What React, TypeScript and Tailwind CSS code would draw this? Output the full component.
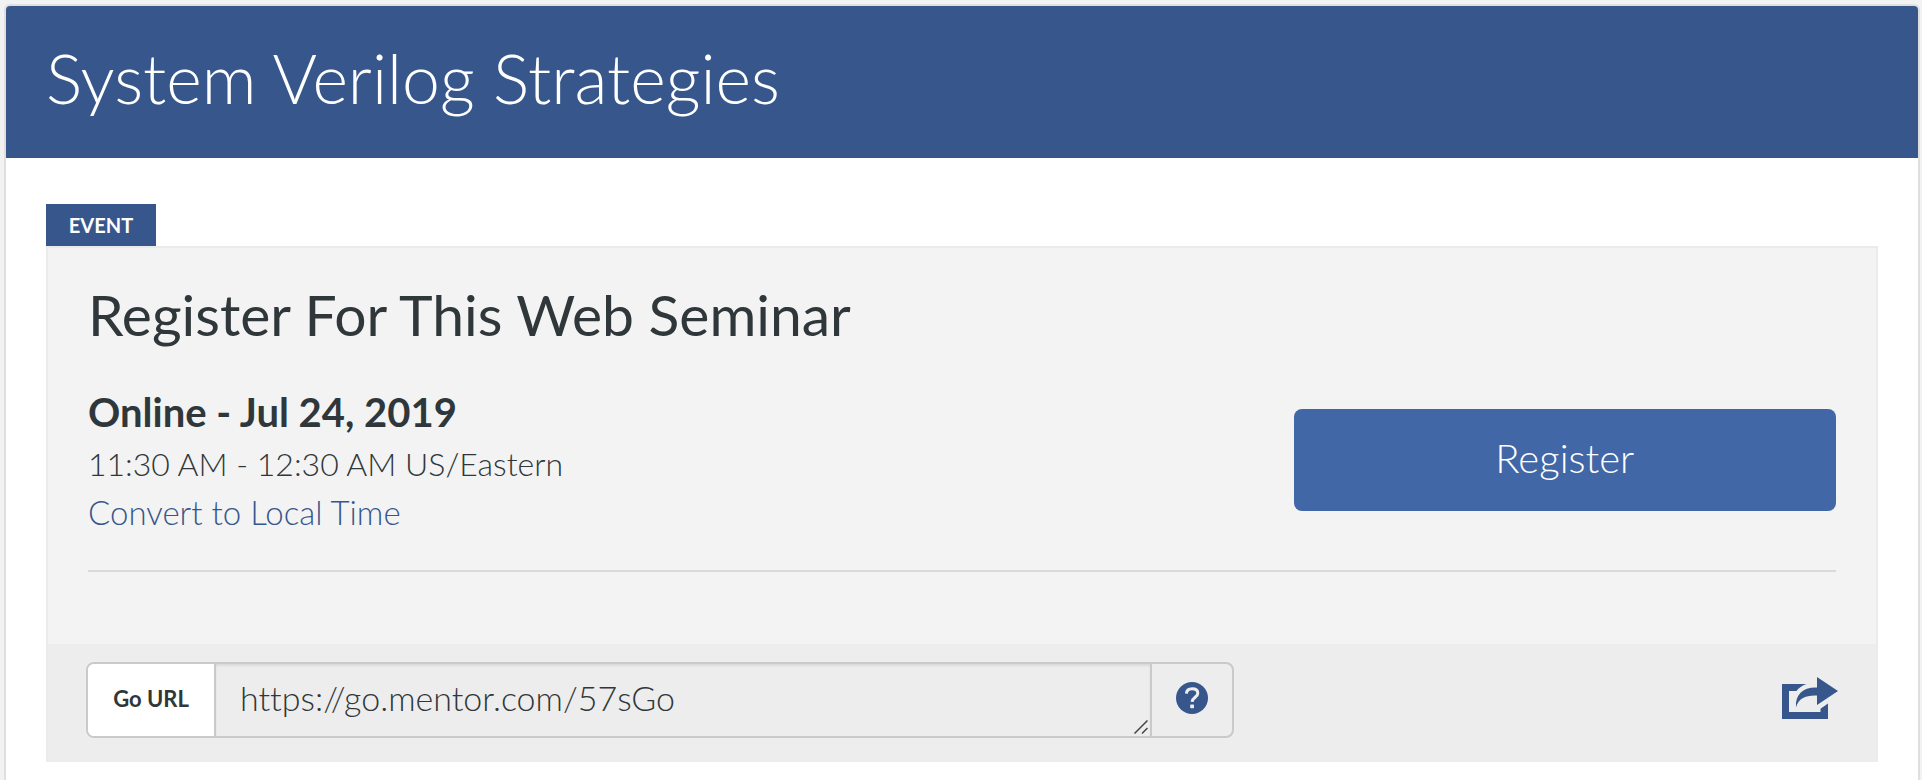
function HelpIcon() {
  return (
    <svg viewBox="0 0 32 32" className="h-8 w-8" aria-hidden="true">
      <circle cx="16" cy="16" r="16" fill="#37578c" />
      <path d="M10.4 11.6C10.6 8.5 12.8 6.8 16.2 6.8c3.500 0 5.600 1.700 5.600 4.400 0 4-5.400 4-5.700 8.600" fill="none" stroke="#ededed" strokeWidth="3" />
      <rect x="14.200" y="22.400" width="3.800" height="3.800" rx="0.600" fill="#ededed" />
    </svg>
  );
}

function ShareIcon() {
  return (
    <svg viewBox="0 0 56 42" className="h-[42px] w-14" fill="#37578c" aria-hidden="true">
      <path d="M0 7H24.500C20 8.600 16.800 11 14.400 14H7v21h31.500v-3.200L46 26.500V42H0z" />
      <path d="M35 0l21 14-21 14v-9.500C24 18 16.500 21 14 30.500 13 17.500 21 10 35 10.500z" />
    </svg>
  );
}

function ResizeGrip() {
  return (
    <svg viewBox="0 0 14 14" className="pointer-events-none absolute right-0.5 bottom-0.5 h-3.5 w-3.5" aria-hidden="true">
      <path d="M0.500 13.500L13.500 0.500M8 13.500L13.500 8" stroke="#444" strokeWidth="1.500" />
    </svg>
  );
}

export default function App() {
  return (
    <div className="min-h-screen bg-[#f2f2f2] pt-1 pr-0.5 pl-1 font-['Lato',sans-serif] font-light text-[#30373a] [font-variant-ligatures:none]">
      <main className="flex min-h-[776px] flex-col overflow-hidden rounded-t-md border-2 border-b-0 border-[#dfdfdf] bg-white">
        <header className="flex h-[152px] items-center bg-[#37578c] px-10 pb-2">
          <h1 className="text-[68px] leading-20 text-white">System Verilog Strategies</h1>
        </header>

        <div className="px-10 pt-[46px] pb-4">
          <div className="flex h-[42px] w-[110px] items-center justify-center bg-[#37578c] text-xl font-bold text-white">
            EVENT
          </div>

          <section className="border-2 border-b-0 border-[#ebebeb] bg-[#f3f3f3]">
            <div className="px-10 pt-[30px] pb-[72px]">
              <h2 className="text-[57px] leading-[72px] font-normal">Register For This Web Seminar</h2>
              <div className="mt-[34px] grid grid-cols-[20fr_9fr] items-center border-b-2 border-[#d9d9d9] pb-[34px]">
                <div className="text-[32px] leading-12">
                  <h3 className="text-[40px] leading-14 font-bold">Online - Jul 24, 2019</h3>
                  <p>11:30 AM - 12:30 AM US/Eastern</p>
                  <a href="#" className="block text-[33px] text-[#37578c]">Convert to Local Time</a>
                </div>
                <button type="button" className="h-[102px] rounded-lg bg-[#4267a7] pb-1 text-[40px] text-white">
                  Register
                </button>
              </div>
            </div>

            <div className="flex items-center justify-between bg-[#ededed] px-[38px] pt-[18px] pb-6">
              <div className="flex h-[76px] w-full max-w-[1148px] overflow-hidden rounded-lg border-2 border-[#cacaca]">
                <label htmlFor="go-url" className="flex w-32 items-center justify-center border-r-2 border-[#cacaca] bg-white pb-1 text-[22px] font-bold">
                  Go URL
                </label>
                <div className="relative flex flex-1 border-r-2 border-[#cacaca]">
                  <textarea
                    id="go-url"
                    rows={1}
                    readOnly
                    defaultValue="https://go.mentor.com/57sGo"
                    className="flex-1 resize-none overflow-hidden px-6 py-2.5 text-[34px] leading-12 shadow-[inset_0_2px_2px_rgba(0,0,0,0.08)] outline-none"
                  />
                  <ResizeGrip />
                </div>
                <button type="button" aria-label="Help" className="flex w-20 items-center justify-center pb-1">
                  <HelpIcon />
                </button>
              </div>
              <button type="button" aria-label="Share" className="pb-1">
                <ShareIcon />
              </button>
            </div>
          </section>
        </div>
      </main>
    </div>
  );
}
